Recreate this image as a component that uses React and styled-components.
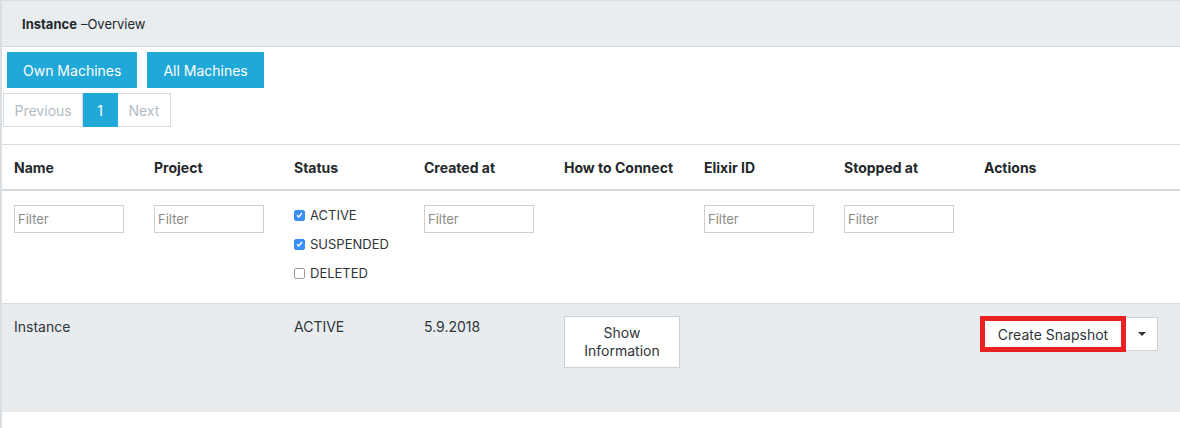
import styled, { createGlobalStyle } from "styled-components";

const GlobalStyle = createGlobalStyle`
  body {
    margin: 0;
    background: #fff;
    font-family: Inter, "Noto Sans", sans-serif;
    color: #23282c;
  }
`;

const COLS = "140px 140px 130px 140px 140px 140px 140px 1fr";

const Card = styled.div`
  border-left: 2px solid #d9dee2;
  min-height: 428px;
  box-sizing: border-box;
`;

const CardHeader = styled.div`
  height: 47px;
  display: flex;
  align-items: center;
  padding-left: 20px;
  background: #e9edf0;
  border-bottom: 1px solid #d5dade;
  border-top: 1px solid #d9dee2;
  box-sizing: border-box;
  font-size: 13px;
  color: #23282c;
  b {
    font-weight: 700;
    margin-right: 4px;
  }
`;

const Toolbar = styled.div`
  display: flex;
  gap: 10px;
  padding: 5px 0 0 5px;
`;

const TabButton = styled.button`
  height: 36px;
  padding: 0 16px;
  border: none;
  background: #20a8d8;
  color: #fff;
  font-family: inherit;
  font-size: 14px;
  cursor: pointer;
`;

const Pager = styled.div`
  display: flex;
  margin: 5px 0 0 1px;
`;

const PageItem = styled.div`
  height: 34px;
  display: flex;
  align-items: center;
  padding: 0 ${(p) => (p.$active ? "14px" : "10.5px")};
  font-size: 14px;
  box-sizing: border-box;
  border: 1px solid ${(p) => (p.$active ? "#20a8d8" : "#d6dbdf")};
  border-left-width: ${(p) => (p.$first ? "1px" : "0")};
  background: ${(p) => (p.$active ? "#20a8d8" : "#fff")};
  color: ${(p) => (p.$active ? "#fff" : "#b2bcc4")};
`;

const Table = styled.div`
  margin-top: 17px;
  border-top: 1px solid #d5dade;
`;

const Row = styled.div`
  display: grid;
  grid-template-columns: ${COLS};
  box-sizing: border-box;
  height: ${(p) => p.$h}px;
  background: ${(p) => p.$bg || "#fff"};
  border-bottom: ${(p) => p.$border || "none"};
`;

const HeadCell = styled.div`
  padding: 0 12px;
  display: flex;
  align-items: center;
  font-size: 14px;
  font-weight: 700;
  color: #23282c;
`;

const Cell = styled.div`
  padding: 14px 12px 0;
  font-size: 14px;
  color: #2f353a;
  line-height: 18px;
`;

const FilterInput = styled.input`
  width: 110px;
  height: 28px;
  box-sizing: border-box;
  border: 1px solid #cfcfcf;
  padding: 0 3px;
  font-family: inherit;
  font-size: 13px;
  &::placeholder {
    color: #8a8a8a;
  }
`;

const CheckList = styled.div`
  display: flex;
  flex-direction: column;
  gap: 11px;
  margin-top: 1px;
`;

const CheckRow = styled.label`
  display: flex;
  align-items: center;
  gap: 5px;
  font-size: 13px;
  color: #2f353a;
  height: 18px;
`;

const Box = styled.span`
  width: 11px;
  height: 11px;
  border-radius: 2px;
  box-sizing: border-box;
  display: inline-flex;
  align-items: center;
  justify-content: center;
  background: ${(p) => (p.$on ? "#3a8ef5" : "#fff")};
  border: 1px solid ${(p) => (p.$on ? "#3a8ef5" : "#9a9a9a")};
`;

const InfoButton = styled.button`
  width: 116px;
  height: 52px;
  margin-top: -2px;
  background: #fff;
  border: 1px solid #cdd1d4;
  font-family: inherit;
  font-size: 14px;
  line-height: 18px;
  color: #2f353a;
`;

const SplitGroup = styled.div`
  display: flex;
  align-items: center;
  margin: -2px 0 0 -4px;
`;

const SnapshotButton = styled.button`
  width: 146px;
  height: 36px;
  box-sizing: border-box;
  background: #fff;
  border: 5px solid #e82222;
  font-family: inherit;
  font-size: 14px;
  color: #2f353a;
`;

const CaretButton = styled.button`
  width: 32px;
  height: 34px;
  box-sizing: border-box;
  background: #fff;
  border: 1px solid #cdd1d4;
  border-left: none;
  display: flex;
  align-items: center;
  justify-content: center;
`;

const Caret = styled.span`
  border-left: 4px solid transparent;
  border-right: 4px solid transparent;
  border-top: 4px solid #2f353a;
`;

const Check = () => (
  <svg width="7" height="6" viewBox="0 0 7 6">
    <path d="M1 3.2 L2.8 5 L6 1" stroke="#fff" strokeWidth="1.4" fill="none" />
  </svg>
);

const headers = ["Name", "Project", "Status", "Created at", "How to Connect", "Elixir ID", "Stopped at", "Actions"];

export default function App() {
  return (
    <>
      <GlobalStyle />
      <Card>
        <CardHeader>
          <b>Instance</b> –Overview
        </CardHeader>
        <Toolbar>
          <TabButton>Own Machines</TabButton>
          <TabButton>All Machines</TabButton>
        </Toolbar>
        <Pager>
          <PageItem $first>Previous</PageItem>
          <PageItem $active>1</PageItem>
          <PageItem>Next</PageItem>
        </Pager>
        <Table>
          <Row $h={46} $border="2px solid #d5dade">
            {headers.map((h) => (
              <HeadCell key={h}>{h}</HeadCell>
            ))}
          </Row>
          <Row $h={113} $border="1px solid #d5dade">
            <Cell><FilterInput placeholder="Filter" /></Cell>
            <Cell><FilterInput placeholder="Filter" /></Cell>
            <Cell>
              <CheckList>
                <CheckRow><Box $on><Check /></Box>ACTIVE</CheckRow>
                <CheckRow><Box $on><Check /></Box>SUSPENDED</CheckRow>
                <CheckRow><Box />DELETED</CheckRow>
              </CheckList>
            </Cell>
            <Cell><FilterInput placeholder="Filter" /></Cell>
            <Cell />
            <Cell><FilterInput placeholder="Filter" /></Cell>
            <Cell><FilterInput placeholder="Filter" /></Cell>
            <Cell />
          </Row>
          <Row $h={108} $bg="#e9ecef">
            <Cell>Instance</Cell>
            <Cell />
            <Cell>ACTIVE</Cell>
            <Cell>5.9.2018</Cell>
            <Cell>
              <InfoButton>Show<br />Information</InfoButton>
            </Cell>
            <Cell />
            <Cell />
            <Cell>
              <SplitGroup>
                <SnapshotButton>Create Snapshot</SnapshotButton>
                <CaretButton><Caret /></CaretButton>
              </SplitGroup>
            </Cell>
          </Row>
        </Table>
      </Card>
    </>
  );
}
